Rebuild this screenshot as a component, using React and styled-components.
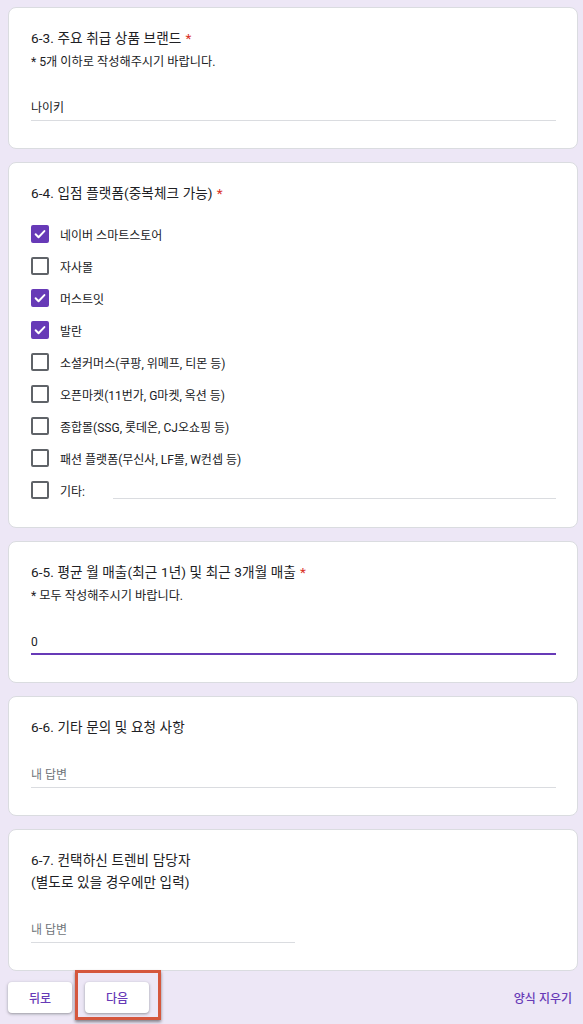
import React from 'react';
import styled, { createGlobalStyle } from 'styled-components';

const GlobalStyle = createGlobalStyle`
  body {
    margin: 0;
    background: #ede7f6;
    font-family: Roboto, "Noto Sans CJK KR", sans-serif;
    color: #202124;
  }
`;

const Page = styled.div`
  display: flex;
  flex-direction: column;
  gap: 13px;
  padding: 7px 5px 0 8px;
  min-height: 1024px;
  box-sizing: border-box;
`;

const Card = styled.section`
  background: #fff;
  border: 1px solid #dadce0;
  border-radius: 8px;
  padding: 19px 21px ${(p) => p.$pb || 27}px 22px;
`;

const Title = styled.div`
  font-size: 13.6px;
  line-height: 22px;
  font-weight: 400;
  color: #202124;
  letter-spacing: 0.1px;
`;

const Required = styled.span`
  color: #d93025;
  margin-left: 4px;
`;

const Description = styled.div`
  font-size: 12.2px;
  line-height: 18px;
  margin-top: 4px;
  color: #202124;
`;

const Field = styled.div`
  width: ${(p) => p.$width || 'auto'};
  margin-top: 27px;
  font-size: 12px;
  line-height: 20px;
  padding-bottom: ${(p) => (p.$focused ? 1 : 2)}px;
  border-bottom: ${(p) => (p.$focused ? '2px solid #673ab7' : '1px solid #dadce0')};
  color: ${(p) => (p.$placeholder ? '#70757a' : '#202124')};
`;

const Options = styled.div`
  margin-top: 14px;
  display: flex;
  flex-direction: column;
`;

const OptionRow = styled.label`
  display: flex;
  align-items: center;
  height: 32px;
  gap: 11px;
  font-size: 12px;
  color: #202124;
`;

const Box = styled.span`
  width: 18px;
  height: 18px;
  box-sizing: border-box;
  border-radius: 2px;
  border: 2px solid ${(p) => (p.$checked ? '#673ab7' : '#5f6368')};
  background: ${(p) => (p.$checked ? '#673ab7' : '#fff')};
  display: flex;
  align-items: center;
  justify-content: center;
  flex-shrink: 0;
`;

const OtherLine = styled.span`
  flex: 1;
  align-self: flex-end;
  margin: 0 0 7px 17px;
  border-bottom: 1px solid #dadce0;
`;

const Footer = styled.div`
  display: flex;
  align-items: center;
  gap: 13px;
  margin-top: -2px;
`;

const Button = styled.button`
  position: relative;
  height: 31px;
  min-width: 64px;
  padding: 0 16px;
  border: none;
  border-radius: 4px;
  background: #fff;
  color: #673ab7;
  font-family: Roboto, "Noto Sans CJK KR", sans-serif;
  font-size: 12px;
  font-weight: 500;
  box-shadow: 0 1px 2px rgba(60, 64, 67, 0.3), 0 1px 3px 1px rgba(60, 64, 67, 0.15);
`;

const Highlight = styled.span`
  position: absolute;
  left: -10px;
  right: -12px;
  top: -12px;
  bottom: -7px;
  border: 3px solid #d5573d;
  box-shadow: 0 2px 3px rgba(0, 0, 0, 0.45);
  pointer-events: none;
`;

const ClearLink = styled.span`
  margin-left: auto;
  padding: 0 6px;
  font-size: 12px;
  font-weight: 500;
  color: #673ab7;
`;

const Check = () => (
  <svg width="14" height="14" viewBox="0 0 24 24" fill="none">
    <path d="M4.5 12.5l5 5L19.5 7" stroke="#fff" strokeWidth="3.4" strokeLinecap="round" strokeLinejoin="round" />
  </svg>
);

const platforms = [
  { label: '네이버 스마트스토어', checked: true },
  { label: '자사몰' },
  { label: '머스트잇', checked: true },
  { label: '발란', checked: true },
  { label: '소셜커머스(쿠팡, 위메프, 티몬 등)' },
  { label: '오픈마켓(11번가, G마켓, 옥션 등)' },
  { label: '종합몰(SSG, 롯데온, CJ오쇼핑 등)' },
  { label: '패션 플랫폼(무신사, LF몰, W컨셉 등)' },
];

const App = () => (
  <>
    <GlobalStyle />
    <Page>
      <Card>
        <Title>6-3. 주요 취급 상품 브랜드<Required>*</Required></Title>
        <Description>* 5개 이하로 작성해주시기 바랍니다.</Description>
        <Field>나이키</Field>
      </Card>

      <Card $pb={21}>
        <Title>6-4. 입점 플랫폼(중복체크 가능)<Required>*</Required></Title>
        <Options>
          {platforms.map((item) => (
            <OptionRow key={item.label}>
              <Box $checked={item.checked}>{item.checked && <Check />}</Box>
              {item.label}
            </OptionRow>
          ))}
          <OptionRow>
            <Box />
            기타:
            <OtherLine />
          </OptionRow>
        </Options>
      </Card>

      <Card>
        <Title>6-5. 평균 월 매출(최근 1년) 및 최근 3개월 매출<Required>*</Required></Title>
        <Description>* 모두 작성해주시기 바랍니다.</Description>
        <Field $focused>0</Field>
      </Card>

      <Card>
        <Title>6-6. 기타 문의 및 요청 사항</Title>
        <Field $placeholder>내 답변</Field>
      </Card>

      <Card>
        <Title>
          6-7. 컨택하신 트렌비 담당자
          <br />
          (별도로 있을 경우에만 입력)
        </Title>
        <Field $placeholder $width="264px">내 답변</Field>
      </Card>

      <Footer>
        <Button>뒤로</Button>
        <Button>
          다음
          <Highlight />
        </Button>
        <ClearLink>양식 지우기</ClearLink>
      </Footer>
    </Page>
  </>
);

export default App;
